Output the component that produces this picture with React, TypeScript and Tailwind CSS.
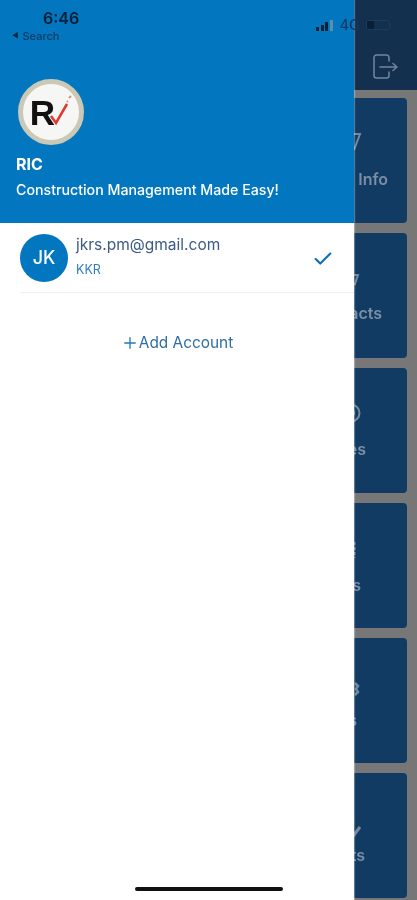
import React from 'react';
import { Check, Plus } from 'lucide-react';

const cards = [
  { label: 'Company Info', box: 'pt-[30px] pr-[19px]', icon: 'edit', iconBox: 'mr-[26px]', textBox: 'mt-[17px]' },
  { label: 'Contacts', box: 'pt-[37px] pr-[25px]', icon: 'edit2', iconBox: 'mr-[21px]', textBox: 'mt-[9px]' },
  { label: 'Notices', box: 'pt-[33px] pr-[41px]', icon: 'circle', iconBox: 'mr-[3px]', textBox: 'mt-[14px]' },
  { label: 'Reports', box: 'pt-[35px] pr-[46px]', icon: 'list', iconBox: 'mr-[3px]', textBox: 'mt-[13px]' },
  { label: 'Settings', box: 'pt-[39px] pr-[50px]', icon: 'gear', iconBox: '-mr-[4px]', textBox: 'mt-[9px]' },
  { label: 'Checklists', box: 'pt-[46px] pr-[42px]', icon: 'tick', iconBox: 'mr-[4px]', textBox: 'mt-[2px]' },
];

const iconPaths: Record<string, React.ReactNode> = {
  edit: <path d="M2 6h20l-6 16" />,
  edit2: <path d="M2 5h19l-5 15" strokeDasharray="30 2 1 1" />,
  circle: (
    <>
      <circle cx="12" cy="12" r="8.5" />
      <circle cx="12" cy="12" r="3" />
    </>
  ),
  list: <path d="M20 4v16" strokeWidth="3" strokeDasharray="3 2" />,
  gear: <path d="M18 6l3 3-2 3 2 3-3 3" strokeWidth="2.5" />,
  tick: <path d="M10 20l4 0 9-12" strokeWidth="3" />,
};

const Card: React.FC<(typeof cards)[number]> = ({ label, box, icon, iconBox, textBox }) => (
  <div className={`h-[125px] rounded-[4px] bg-[#113b62] flex flex-col items-end ${box}`}>
    <svg width="24" height="24" viewBox="0 0 24 24" fill="none" stroke="#7488a0" strokeWidth="2" className={`blur-[0.4px] ${iconBox}`}>
      {iconPaths[icon]}
    </svg>
    <span className={`text-[16px] leading-[20px] font-semibold text-[#7a8ea5] blur-[0.5px] ${textBox}`}>{label}</span>
  </div>
);

export default function App() {
  return (
    <div className="relative w-[417px] h-[900px] overflow-hidden bg-[#777777] font-['Inter',sans-serif]">
      {/* Screen behind the drawer */}
      <div className="h-[90px] bg-[#14304f] flex justify-end items-start pt-[54px] pr-[19px]">
        <svg width="26" height="26" viewBox="0 0 26 26" fill="none" stroke="#74859a" strokeWidth="1.5" strokeLinecap="round" strokeLinejoin="round" className="blur-[0.3px]">
          <path d="M17 7V3.5A2.5 2.5 0 0 0 14.5 1h-10A2.5 2.5 0 0 0 2 3.5v18A2.5 2.5 0 0 0 4.5 24h10a2.5 2.5 0 0 0 2.5-2.5V18" />
          <path d="M8 13h17M21 9.5l4 3.5-4 3.5" />
        </svg>
      </div>
      <div className="flex flex-col gap-[10px] pt-[8px] pr-[10px]">
        {cards.map((card) => (
          <Card key={card.label} {...card} />
        ))}
      </div>

      {/* Drawer */}
      <div className="absolute left-0 top-0 bottom-0 w-[354px] bg-white flex flex-col shadow-[1px_0_1px_rgba(255,255,255,0.3)]">
        <div className="h-[223px] shrink-0 bg-[#0277c0] px-[16px] pt-[79px]">
          <div className="w-[66px] h-[66px] ml-[2px] rounded-full bg-[#f6f6f4] border-[5px] border-[#cbc8b6] flex items-center justify-center relative blur-[0.4px]">
            <span className="font-['Liberation_Sans',sans-serif] font-bold text-[35px] leading-none text-[#111111] -ml-[17px]">R</span>
            <svg width="26" height="34" viewBox="0 0 26 34" fill="none" className="absolute left-[24px] top-[9px]">
              <path d="M4 23l5 7L20 11" stroke="#e0382e" strokeWidth="2.5" />
              <path d="M22 5l2-2M20 9l1-1" stroke="#e88a86" strokeWidth="2" />
            </svg>
          </div>
          <div className="mt-[8px] text-[16px] leading-[22px] font-bold text-white blur-[0.3px]">RIC</div>
          <div className="mt-[5px] text-[14.2px] leading-[20px] font-medium text-white blur-[0.3px]">Construction Management Made Easy!</div>
        </div>

        <div className="pl-[20px]">
          <div className="h-[70px] flex items-center border-b border-[#eeeeee]">
            <div className="w-[48px] h-[48px] rounded-full bg-[#0277c0] flex items-center justify-center text-[18px] font-medium text-white blur-[0.3px]">JK</div>
            <div className="ml-[8px] flex-1 flex flex-col -mt-[3px]">
              <span className="text-[15.5px] leading-[20px] text-[#3c5a85] blur-[0.3px]">jkrs.pm@gmail.com</span>
              <span className="mt-[7px] text-[12.5px] leading-[16px] text-[#2f7fc1] blur-[0.3px]">KKR</span>
            </div>
            <Check className="w-[22px] h-[22px] mr-[20px] mt-[2px] text-[#0b6db3]" strokeWidth={2.25} />
          </div>
        </div>

        <div className="mt-[38px] flex items-center justify-center text-[#2f6ca8]">
          <Plus className="w-[18px] h-[18px] -mr-[1px] text-[#1f78bd]" strokeWidth={1.75} />
          <span className="ml-[1px] text-[15.4px] leading-[24px] blur-[0.3px]">Add Account</span>
        </div>
      </div>

      {/* Status bar overlay */}
      <div className="absolute left-[43px] top-[8px] text-[16px] leading-[20px] font-semibold text-[#0a1f33] blur-[0.4px]">6:46</div>
      <div className="absolute left-[12px] top-[29px] flex items-center gap-[4px] text-[11px] leading-[14px] font-medium text-[#0c3a62] blur-[0.4px]">
        <span className="text-[7px] text-[#0a2238]">◀</span>
        <span>Search</span>
      </div>
      <div className="absolute left-[316px] top-[17px] flex items-center gap-[7px]">
        <div className="flex items-end gap-[1.5px] h-[12px] blur-[0.3px]">
          <div className="w-[3px] h-[4px] bg-[#0a1f33]" />
          <div className="w-[3px] h-[6px] bg-[#0a1f33]" />
          <div className="w-[3px] h-[9px] bg-[#0a1f33]" />
          <div className="w-[3px] h-[11px] bg-[#5f8db0]" />
        </div>
        <span className="text-[14.5px] leading-[16px] font-medium text-[#0c3a62] blur-[0.3px]">4G</span>
        <div className="w-[24px] h-[10px] rounded-[2px] border border-[#2c5a80]/30 -ml-[1px] blur-[0.3px]">
          <div className="w-[7px] h-full bg-[#0a1f33]" />
        </div>
      </div>

      {/* Home indicator */}
      <div className="absolute left-[135px] top-[887px] w-[148px] h-[4px] rounded-full bg-[#111111]" />
    </div>
  );
}
